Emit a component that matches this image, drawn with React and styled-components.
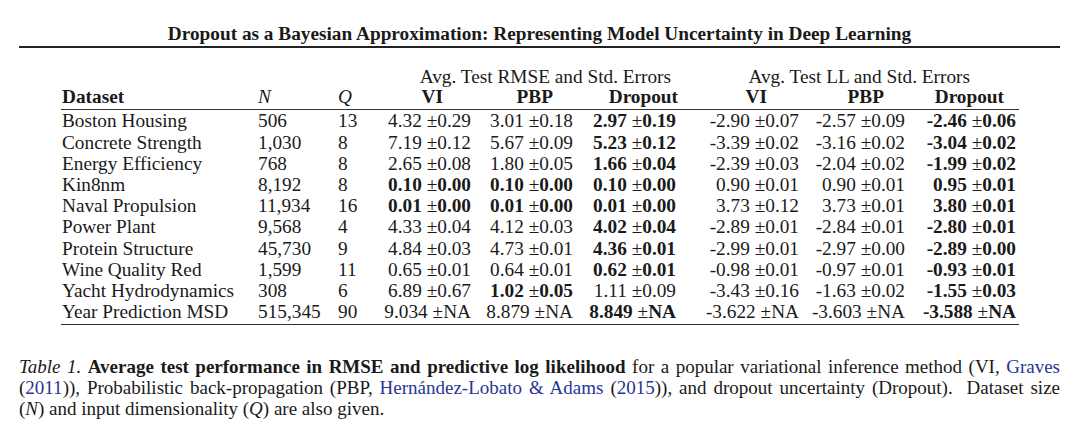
import React from 'react'
import styled, { createGlobalStyle } from 'styled-components'

const GlobalStyle = createGlobalStyle`
  html, body {
    margin: 0;
    padding: 0;
    background: #ffffff;
  }
  body {
    font-family: "Liberation Serif", "Times New Roman", serif;
    color: #1a1a1a;
  }
`

const Page = styled.div`
  width: 1080px;
  box-sizing: border-box;
  padding: 0 20px 0 19px;
`

const Title = styled.h1`
  margin: 0;
  padding: 22.5px 0 1.5px;
  font-size: 19.3px;
  line-height: 22px;
  font-weight: bold;
  text-align: center;
  border-bottom: 2px solid #222;
`

const Table = styled.table`
  margin: 20px 0 0 42px;
  width: 958px;
  border-collapse: collapse;
  table-layout: fixed;
  font-size: 19.3px;
  line-height: 21.2px;
`

const Cell = styled.td`
  padding: 0 ${p => p.$pr || 0}px 0 ${p => p.$pl || 0}px;
  white-space: nowrap;
  text-align: ${p => p.$align || 'right'};
  font-weight: ${p => (p.$bold ? 'bold' : 'normal')};
  font-style: ${p => (p.$italic ? 'italic' : 'normal')};
`

const GroupRow = styled.tr`
  line-height: 18px;
`

const HeadRow = styled.tr`
  line-height: 21.4px;
  border-bottom: 1px solid #333;
  td {
    padding-bottom: 2px;
  }
`

const BodyRow = styled.tr`
  border-bottom: ${p => (p.$last ? '1px solid #333' : 'none')};
  td {
    padding-bottom: ${p => (p.$last ? '2px' : '0')};
  }
`

const Caption = styled.div`
  margin-top: 32px;
  font-size: 19px;
  line-height: 20.7px;
`

const CaptionLine = styled.div`
  white-space: nowrap;
  text-align: ${p => (p.$justify ? 'justify' : 'left')};
  text-align-last: ${p => (p.$justify ? 'justify' : 'left')};
`

const Cite = styled.span`
  color: #283593;
`

const colWidths = [196, 80, 43, 91, 102, 105, 121, 106, 114]
// right padding for body values per numeric column
const valuePad = [0, 0, 2, 0, 0, 3]
const headers = [
  { label: 'VI', pr: 28 },
  { label: 'PBP', pr: 20 },
  { label: 'Dropout', pr: 0 },
  { label: 'VI', pr: 32 },
  { label: 'PBP', pr: 21 },
  { label: 'Dropout', pr: 15 },
]

// [mean, error, best]
const rows = [
  ['Boston Housing', '506', '13', ['4.32', '0.29'], ['3.01', '0.18'], ['2.97', '0.19', 1], ['-2.90', '0.07'], ['-2.57', '0.09'], ['-2.46', '0.06', 1]],
  ['Concrete Strength', '1,030', '8', ['7.19', '0.12'], ['5.67', '0.09'], ['5.23', '0.12', 1], ['-3.39', '0.02'], ['-3.16', '0.02'], ['-3.04', '0.02', 1]],
  ['Energy Efficiency', '768', '8', ['2.65', '0.08'], ['1.80', '0.05'], ['1.66', '0.04', 1], ['-2.39', '0.03'], ['-2.04', '0.02'], ['-1.99', '0.02', 1]],
  ['Kin8nm', '8,192', '8', ['0.10', '0.00', 1], ['0.10', '0.00', 1], ['0.10', '0.00', 1], ['0.90', '0.01'], ['0.90', '0.01'], ['0.95', '0.01', 1]],
  ['Naval Propulsion', '11,934', '16', ['0.01', '0.00', 1], ['0.01', '0.00', 1], ['0.01', '0.00', 1], ['3.73', '0.12'], ['3.73', '0.01'], ['3.80', '0.01', 1]],
  ['Power Plant', '9,568', '4', ['4.33', '0.04'], ['4.12', '0.03'], ['4.02', '0.04', 1], ['-2.89', '0.01'], ['-2.84', '0.01'], ['-2.80', '0.01', 1]],
  ['Protein Structure', '45,730', '9', ['4.84', '0.03'], ['4.73', '0.01'], ['4.36', '0.01', 1], ['-2.99', '0.01'], ['-2.97', '0.00'], ['-2.89', '0.00', 1]],
  ['Wine Quality Red', '1,599', '11', ['0.65', '0.01'], ['0.64', '0.01'], ['0.62', '0.01', 1], ['-0.98', '0.01'], ['-0.97', '0.01'], ['-0.93', '0.01', 1]],
  ['Yacht Hydrodynamics', '308', '6', ['6.89', '0.67'], ['1.02', '0.05', 1], ['1.11', '0.09'], ['-3.43', '0.16'], ['-1.63', '0.02'], ['-1.55', '0.03', 1]],
  ['Year Prediction MSD', '515,345', '90', ['9.034', 'NA'], ['8.879', 'NA'], ['8.849', 'NA', 1], ['-3.622', 'NA'], ['-3.603', 'NA'], ['-3.588', 'NA', 1]],
]

function Value ({ v, pr }) {
  const [mean, err, bold] = v
  const B = bold ? 'b' : 'span'
  return (
    <Cell $pr={pr}>
      <B>{mean}</B> ±<B>{err}</B>
    </Cell>
  )
}

export default function App () {
  return (
    <Page>
      <GlobalStyle />
      <Title>Dropout as a Bayesian Approximation: Representing Model Uncertainty in Deep Learning</Title>
      <Table>
        <colgroup>
          {colWidths.map((w, i) => <col key={i} style={{ width: w }} />)}
        </colgroup>
        <tbody>
          <GroupRow>
            <Cell colSpan={3} />
            <Cell colSpan={3} $pr={7}>Avg. Test RMSE and Std. Errors</Cell>
            <Cell colSpan={3} $pr={49}>Avg. Test LL and Std. Errors</Cell>
          </GroupRow>
          <HeadRow>
            <Cell $align="left" $pl={1} $bold>Dataset</Cell>
            <Cell $align="left" $pl={1} $italic>N</Cell>
            <Cell $align="left" $pl={1} $italic>Q</Cell>
            {headers.map((h, i) => (
              <Cell key={i} $pr={h.pr} $bold>{h.label}</Cell>
            ))}
          </HeadRow>
          {rows.map((r, i) => (
            <BodyRow key={r[0]} $last={i === rows.length - 1}>
              <Cell $align="left" $pl={1}>{r[0]}</Cell>
              <Cell $align="left" $pl={1}>{r[1]}</Cell>
              <Cell $align="left" $pl={1}>{r[2]}</Cell>
              {r.slice(3).map((v, j) => <Value key={j} v={v} pr={valuePad[j]} />)}
            </BodyRow>
          ))}
        </tbody>
      </Table>
      <Caption>
        <CaptionLine $justify>
          <i>Table 1.</i> <b>Average test performance in RMSE and predictive log likelihood</b> for a popular variational inference method (VI, <Cite>Graves</Cite>
        </CaptionLine>
        <CaptionLine $justify>
          (<Cite>2011</Cite>)), Probabilistic back-propagation (PBP, <Cite>Hernández-Lobato &amp; Adams</Cite> (<Cite>2015</Cite>)), and dropout uncertainty (Dropout).&nbsp; Dataset size
        </CaptionLine>
        <CaptionLine>
          (<i>N</i>) and input dimensionality (<i>Q</i>) are also given.
        </CaptionLine>
      </Caption>
    </Page>
  )
}
